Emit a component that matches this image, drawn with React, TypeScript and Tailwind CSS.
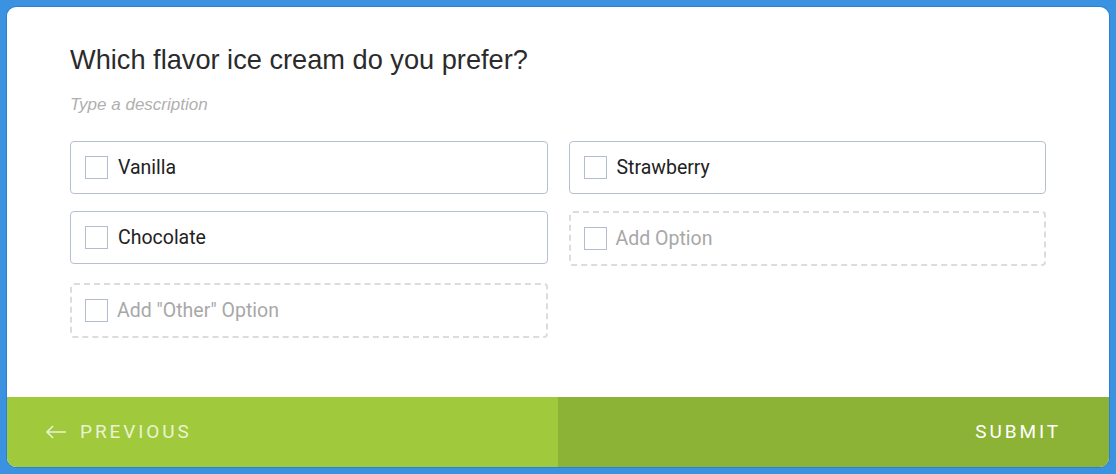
import React from "react";

function Box() {
  return <span className="w-[23px] h-[23px] border border-[#b3bdcf] bg-white shrink-0" />;
}

function Option({ label, dashed }: { label: string; dashed?: boolean }) {
  return (
    <div
      className={
        dashed
          ? "h-[55px] rounded-[4px] border-2 border-dashed border-[#dcdcdc] flex items-center pl-[13px] gap-[9px]"
          : "h-[53px] rounded-[4px] border border-[#b6c0d2] flex items-center pl-[14px] gap-[10px]"
      }
    >
      <Box />
      <span
        className={
          dashed
            ? "text-[19.5px] text-[#a8a8a8] font-['Roboto',sans-serif]"
            : "text-[19.5px] text-[#222] font-['Roboto',sans-serif]"
        }
      >
        {label}
      </span>
    </div>
  );
}

export default function App() {
  return (
    <div className="w-[1116px] h-[474px] bg-[#3a92e0] p-[7px]">
      <div className="h-[460px] bg-white rounded-[9px] overflow-hidden flex flex-col ring-1 ring-[#2a82d4]">
        <div className="flex-1 px-[63px] pt-[35px]">
          <h1 className="text-[27.2px] leading-[36px] text-[#2b2b2b] font-['Liberation_Sans',Arial,sans-serif]">
            Which flavor ice cream do you prefer?
          </h1>
          <p className="mt-[15px] text-[17px] leading-[24px] italic text-[#b0b0b0] font-['Liberation_Sans',Arial,sans-serif]">
            Type a description
          </p>
          <div className="mt-[24px] grid grid-cols-2 gap-x-[21px] gap-y-[17px]">
            <Option label="Vanilla" />
            <Option label="Strawberry" />
            <Option label="Chocolate" />
            <Option label="Add Option" dashed />
            <Option label={'Add "Other" Option'} dashed />
          </div>
        </div>
        <div className="h-[70px] flex font-['Roboto',sans-serif] text-[19px] tracking-[2.9px]">
          <div className="w-[551px] bg-[#a0ca3c] flex items-center pl-[38px] gap-[13px] text-[#eaf2d4]">
            <svg width="22" height="14" viewBox="0 0 22 14" fill="none" stroke="#eaf2d4" strokeWidth="1.6">
              <path d="M21 7H2M8 1L2 7l6 6" />
            </svg>
            <span>PREVIOUS</span>
          </div>
          <div className="flex-1 bg-[#8cb336] flex items-center justify-end pr-[48px] text-white">
            <span>SUBMIT</span>
          </div>
        </div>
      </div>
    </div>
  );
}
